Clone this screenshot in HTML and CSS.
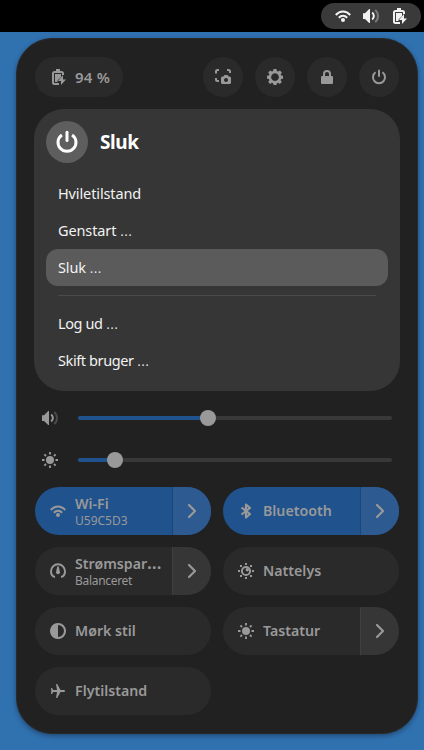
FILE: index.html
```html
<!DOCTYPE html>
<html lang="da">
<head>
<meta charset="utf-8">
<title>Kvikindstillinger</title>
<link rel="stylesheet" href="styles.css">
</head>
<body>
<svg class="defs" aria-hidden="true">
  <symbol id="wifi" viewBox="0 0 16 16"><path d="M.8 7C4.800 2.300 11.200 2.300 15.200 7M3.800 9.700c2.400-2.600 6-2.600 8.400 0" fill="none" stroke="currentColor" stroke-width="2"/><circle cx="8" cy="12" r="2"/></symbol>
  <symbol id="volume" viewBox="0 0 16 16"><path d="M0 5.200h2L6.200 1H7v14h-.8L2 10.900H0z"/><path d="M9.200 4.500c2.200 1.800 2.200 5.200 0 7" fill="none" stroke="currentColor" stroke-width="2"/><path d="M12.200 2c3.700 3 3.700 9 0 12" fill="none" stroke="currentColor" stroke-width="2" opacity=".35"/></symbol>
  <symbol id="battery" viewBox="0 0 16 16"><path d="M8 15H3.500Q2 15 2 13.500V4.500Q2 3 3.500 3H10.500Q12 3 12 4.500V6" fill="none" stroke="currentColor" stroke-width="2"/><path d="M5 0h4v3H5zM4 5h6v3L6.500 11.500V13H4zM12 6v4.500h3L10 16v-4H7z"/></symbol>
  <symbol id="shot" viewBox="0 0 16 16"><path d="M1 4.500V2.500Q1 1 2.500 1H4M12 1h1.500Q15 1 15 2.500V4M1 9v1.500Q1 12 2.500 12H4" fill="none" stroke="currentColor" stroke-width="2"/><path fill-rule="evenodd" d="M9.500 6h3l1.200 1.500H14.500Q16 7.500 16 9V13.500Q16 15 14.500 15h-7Q6 15 6 13.500V9Q6 7.500 7.500 7.500h.8zM11 9a2 2 0 1 0 .01 0z"/></symbol>
  <symbol id="gear" viewBox="0 0 16 16"><path fill-rule="evenodd" d="M6.500 0h3l.4 2.100 1.200.5 1.800-1.200 2 2-1.200 1.800.5 1.200 1.800.3v3l-1.900.4-.5 1.200 1.200 1.700-2 2-1.700-1.200-1.200.5-.4 1.700h-3l-.4-1.700-1.200-.5L3.200 15l-2-2 1.200-1.700-.5-1.200L0 9.700v-3l1.900-.3.5-1.200L1.200 3.400l2-2L4.900 2.600l1.200-.5zM8 4.200a3.900 3.900 0 1 0 .01 0z"/></symbol>
  <symbol id="lock" viewBox="0 0 16 16"><path d="M5 7V5a3 3 0 0 1 6 0V7" fill="none" stroke="currentColor" stroke-width="2"/><rect x="2" y="7" width="12" height="8" rx="1"/></symbol>
  <symbol id="power" viewBox="0 0 16 16"><path d="M4.600 3.300a6 6 0 1 0 6.800 0" fill="none" stroke="currentColor" stroke-width="2"/><path d="M8 1.500v5.500" fill="none" stroke="currentColor" stroke-width="2" stroke-linecap="round"/></symbol>
  <symbol id="rays" viewBox="0 0 16 16"><path d="M8 0v2.500M8 13.500V16M0 8h2.500M13.500 8H16M2.400 2.400l1.600 1.600M12 12l1.600 1.600M13.600 2.400L12 4M4 12l-1.600 1.600" fill="none" stroke="currentColor" stroke-width="1.900"/></symbol>
  <symbol id="sun" viewBox="0 0 16 16"><use href="#rays"/><circle cx="8" cy="8" r="4"/></symbol>
  <symbol id="night" viewBox="0 0 16 16"><path d="M7 0h2v2H7zM7 14h2v2H7zM0 7h2v2H0zM14 7h2v2h-2zM2 2h2v2H2zM12 2h2v2h-2zM2 12h2v2H2zM12 12h2v2h-2z"/><circle cx="8" cy="8" r="4.100" fill="none" stroke="currentColor" stroke-width="2"/><circle cx="9.300" cy="6.700" r="1.700"/></symbol>
  <symbol id="gauge" viewBox="0 0 16 16"><path d="M5 14C2.500 13.500 1 11 1 8.300a7 7 0 0 1 14 0c0 2.700-1.500 5.200-4 5.700" fill="none" stroke="currentColor" stroke-width="2"/><path d="M7.200 3.500h1.600L10 9.300a2 2 0 1 1-4 0z"/></symbol>
  <symbol id="bluetooth" viewBox="0 0 16 16"><path d="M3.500 4.500L12 11 8 14.500v-13L12 5l-8.500 6.500" fill="none" stroke="currentColor" stroke-width="2.200" stroke-linejoin="round"/></symbol>
  <symbol id="dark" viewBox="0 0 16 16"><path fill-rule="evenodd" d="M8 0a8 8 0 1 0 .01 0zM8 2a6 6 0 0 1 0 12z"/></symbol>
  <symbol id="plane" viewBox="0 0 16 16"><path d="M6 1h1.200L10.500 7H14q1 0 1 1t-1 1h-3.500L7.200 15H6L7 9H3.300L2 11H1l.3-3L1 5h1l1.300 2H7z"/></symbol>
  <symbol id="chevron" viewBox="0 0 16 16"><path d="M5 2l6 6-6 6" fill="none" stroke="currentColor" stroke-width="2.200" stroke-linecap="round" stroke-linejoin="round"/></symbol>
</svg>
<header class="topbar">
  <div class="status"><svg><use href="#wifi"/></svg><svg><use href="#volume"/></svg><svg><use href="#battery"/></svg></div>
</header>
<main class="panel">
  <div class="actions">
    <div class="charge"><svg><use href="#battery"/></svg><span>94 %</span></div>
    <div class="round"><svg><use href="#shot"/></svg></div>
    <div class="round"><svg><use href="#gear"/></svg></div>
    <div class="round"><svg><use href="#lock"/></svg></div>
    <div class="round"><svg><use href="#power"/></svg></div>
  </div>
  <section class="menu">
    <div class="menu-head"><div class="menu-icon"><svg><use href="#power"/></svg></div><h1>Sluk</h1></div>
    <div class="item">Hviletilstand</div>
    <div class="item">Genstart <i>…</i></div>
    <div class="item selected">Sluk <i>…</i></div>
    <div class="separator"></div>
    <div class="item snug">Log ud <i>…</i></div>
    <div class="item snug">Skift bruger <i>…</i></div>
  </section>
  <div class="slider"><svg><use href="#volume"/></svg><div class="track"><div class="fill" style="width:130px"></div><div class="knob"></div></div></div>
  <div class="slider"><svg><use href="#sun"/></svg><div class="track"><div class="fill" style="width:37px"></div><div class="knob"></div></div></div>
  <section class="tiles">
    <div class="tile on"><div class="body"><svg><use href="#wifi"/></svg><div class="label double"><b>Wi-Fi</b><small>U59C5D3</small></div></div><div class="more"><svg><use href="#chevron"/></svg></div></div>
    <div class="tile on"><div class="body"><svg><use href="#bluetooth"/></svg><div class="label"><b>Bluetooth</b></div></div><div class="more"><svg><use href="#chevron"/></svg></div></div>
    <div class="tile"><div class="body"><svg><use href="#gauge"/></svg><div class="label double"><b>Strømspar<i>…</i></b><small class="tight">Balanceret</small></div></div><div class="more"><svg><use href="#chevron"/></svg></div></div>
    <div class="tile"><div class="body"><svg><use href="#night"/></svg><div class="label"><b>Nattelys</b></div></div></div>
    <div class="tile"><div class="body"><svg><use href="#dark"/></svg><div class="label"><b>Mørk stil</b></div></div></div>
    <div class="tile"><div class="body"><svg><use href="#sun"/></svg><div class="label"><b>Tastatur</b></div></div><div class="more"><svg><use href="#chevron"/></svg></div></div>
    <div class="tile"><div class="body"><svg><use href="#plane"/></svg><div class="label"><b>Flytilstand</b></div></div></div>
  </section>
</main>
</body>
</html>
```
FILE: styles.css
```css
* { box-sizing: border-box; }
body { margin: 0; width: 424px; height: 750px; overflow: hidden; background: #3071b0; color: #999; font: 14px/20px "Noto Sans", sans-serif; }
svg { width: 16px; height: 16px; fill: currentColor; flex: none; display: block; }
i { font-style: normal; font-size: 17.500px; line-height: 1px; letter-spacing: 0; }
.item i { font-size: 16.500px; font-weight: 300; }
.defs { display: none; }
.topbar { height: 32px; background: #000; display: flex; justify-content: flex-end; padding: 3px 3px 3px 0; }
.status { width: 100px; height: 26px; border-radius: 13px; background: #3a3a3a; color: #f2f2f2; display: flex; align-items: center; gap: 12px; padding-left: 14px; }
.status svg:last-child { margin-left: 1px; }
.panel { width: 402px; height: 696px; margin: 6px 0 0 16px; padding: 18px 17px; border: 1px solid #292929; border-radius: 36px; background: #212121; box-shadow: 0 2px 5px rgba(0, 0, 0, .35); }
.actions { display: flex; gap: 12px; padding: 0 1px; height: 40px; }
.charge { width: 88px; height: 40px; border-radius: 20px; background: #2a2a2a; display: flex; align-items: center; padding-left: 16px; gap: 8px; margin-right: auto; font-weight: 600; font-size: 15px; letter-spacing: .25px; }
.charge span { margin-top: -1px; }
.round { width: 40px; height: 40px; border-radius: 50%; background: #2a2a2a; display: grid; place-items: center; }
.menu { height: 282px; margin-top: 12px; padding: 12px; border-radius: 30px; background: #363636; color: #f2f2f2; }
.menu-head { display: flex; align-items: center; gap: 12px; height: 42px; margin-bottom: 12px; color: #fff; }
.menu-icon { width: 42px; height: 42px; border-radius: 50%; background: #5e5e5e; display: grid; place-items: center; }
.menu-icon svg { width: 24px; height: 24px; }
h1 { margin: 0; font-size: 19px; line-height: 26px; font-weight: 700; letter-spacing: -.4px; }
.item { height: 37px; line-height: 37px; padding-left: 12px; border-radius: 12px; font-size: 14.500px; letter-spacing: -.12px; }
.snug { letter-spacing: -.4px; }
.selected { background: #5b5b5b; }
.separator { height: 1px; background: #4b4b4b; margin: 9px 12px; }
.slider { height: 24px; display: flex; align-items: center; gap: 20px; padding: 0 8px; margin-top: 15px; }
.slider + .slider { margin-top: 18px; }
.track { flex: 1; height: 4px; border-radius: 2px; background: #383838; display: flex; align-items: center; }
.fill { height: 4px; border-radius: 2px; background: #20528d; }
.knob { width: 16px; height: 16px; border-radius: 50%; background: #999; margin-left: -8px; flex: none; }
.tiles { display: grid; grid-template-columns: 176px 176px; gap: 12px; margin: 15px 1px 0; }
.tile { height: 48px; border-radius: 24px; background: #2a2a2a; display: flex; overflow: hidden; }
.body { flex: 1; min-width: 0; display: flex; align-items: center; padding-left: 15px; gap: 9px; }
.body .label { display: flex; flex-direction: column; white-space: nowrap; }
.double { padding-top: 2px; }
b { font-size: 14.200px; line-height: 18px; font-weight: 600; }
small { font-size: 12px; line-height: 16px; }
.tight { letter-spacing: -.3px; }
.more { width: 39px; border-left: 1px solid #404040; background: #363636; display: grid; place-items: center; }
.on { background: #20528d; }
.on .more { background: #2d5a90; border-left-color: #1c4677; }
```
